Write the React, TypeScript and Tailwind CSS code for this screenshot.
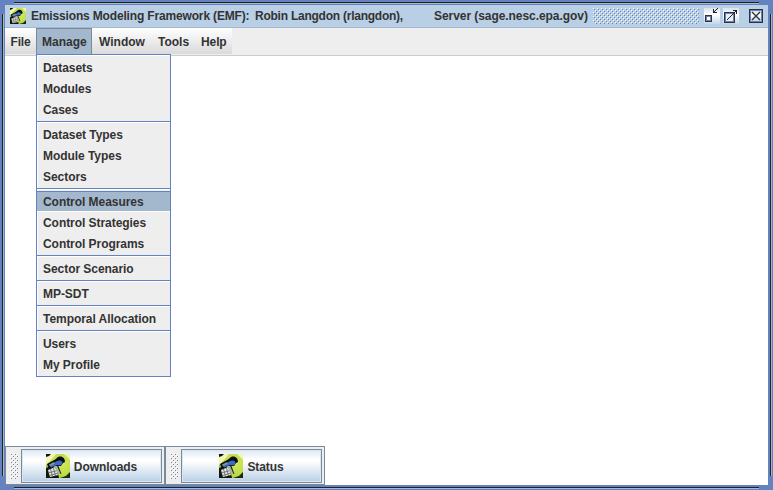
import React from "react";

function GlobeIcon({ size }: { size: number }) {
  return (
    <svg width={size} height={size} viewBox="0 0 24 24" className="block shrink-0">
      <defs>
        <radialGradient id="lime" cx="0.65" cy="0.4" r="0.75">
          <stop offset="0" stopColor="#d3ea5e" />
          <stop offset="0.6" stopColor="#c0dd4a" />
          <stop offset="1" stopColor="#94b52c" />
        </radialGradient>
      </defs>
      <rect width="24" height="24" fill="url(#lime)" />
      <path d="M0 0H10L5 6L0 11Z" fill="#f2f6b4" />
      <path d="M0 0H5L3 2L0 3Z" fill="#111" />
      <path d="M0 14L5 12L11 15L13 24H0Z" fill="#15170f" />
      <path d="M24 18V24H14L20 22Z" fill="#20280c" />
      <path d="M18 0H24V6Z" fill="#f0f6ae" />
      <path d="M1 10L9 5.500L12 3C16 1.500 19 4 19 8L17 9L15 12L11 12L3 15Z" fill="#0b0d18" />
      <path d="M4 11.500L11 7C14 5.500 17 7 16.500 9.500C15.500 11.500 13 11.500 11 11L5 13.500Z" fill="#3d6cc0" />
      <path d="M3 10.500L8 8L9 9.500L4 12.500Z" fill="#7c969c" />
      <path d="M2 16L8 13.500L11 15L12 21L4 23Z" fill="#e2e5e1" />
      <path d="M2 19L11.500 16.500M4 21.500L12 19M4.500 15L6.500 22.500M7.500 14L9.500 22" stroke="#596059" strokeWidth="0.8" fill="none" />
      <path d="M8 12L11 12L14.500 20L12.500 20Z" fill="#a9b8ae" />
      <path d="M11 12L12.500 12L15.500 20L14.500 20Z" fill="#222b16" />
    </svg>
  );
}

function Bumps({ id, width, height, light, dark }: { id: string; width: number; height: number; light: string; dark: string }) {
  return (
    <svg width={width} height={height} shapeRendering="crispEdges" className="block shrink-0">
      <defs>
        <pattern id={id} width="4" height="4" patternUnits="userSpaceOnUse">
          <rect x="0" y="0" width="1" height="1" fill={light} />
          <rect x="2" y="2" width="1" height="1" fill={light} />
          <rect x="1" y="1" width="1" height="1" fill={dark} />
          <rect x="3" y="3" width="1" height="1" fill={dark} />
        </pattern>
      </defs>
      <rect width={width} height={height} fill={`url(#${id})`} />
    </svg>
  );
}

function WindowButtons() {
  return (
    <svg width="62" height="16" shapeRendering="crispEdges" className="ml-[5px] block shrink-0">
      <defs>
        <linearGradient id="btn" x1="0" y1="0" x2="0" y2="1">
          <stop offset="0" stopColor="#d5e3f0" />
          <stop offset="0.4" stopColor="#ffffff" />
          <stop offset="1" stopColor="#c2d6e9" />
        </linearGradient>
      </defs>
      <rect width="16" height="16" fill="url(#btn)" />
      <rect x="1" y="7" width="7" height="7" fill="#333" />
      <rect x="2" y="8" width="6" height="6" fill="#6382bf" />
      <path d="M7 7h1v7H1v-1h6z" fill="#333" />
      <rect x="3" y="9" width="3" height="3" fill="#fff" />
      <path d="M9 1h1v3h3v1H9zM10 3h1v1h-1zM11 2h1v1h-1zM12 1h1v1h-1zM13 0h1v1h-1z" fill="#222" />
      <g transform="translate(19 0)">
        <rect width="16" height="16" fill="url(#btn)" />
        <path d="M1 4h11v11H1z" fill="#333" />
        <path d="M2 5h9v9H2z" fill="#6382bf" />
        <path d="M3 6h7v7H3z" fill="#e9f1f8" />
        <path d="M4 11h1v1H4zM5 10h1v1H5zM6 9h1v1H6zM7 8h1v1H7zM8 7h1v1H8zM9 6h1v1H9zM10 5h1v1h-1zM11 4h1v1h-1zM12 3h1v1h-1zM10 2h4v4h-1V3h-3z" fill="#222" />
      </g>
      <g transform="translate(45 1)">
        <rect width="14" height="14" fill="#333" />
        <rect x="1" y="1" width="12" height="12" fill="#6382bf" />
        <rect x="2" y="2" width="10" height="10" fill="url(#btn)" />
        <path d="M3 3L11 11M11 3L3 11" stroke="#333" strokeWidth="1.4" shapeRendering="auto" />
      </g>
    </svg>
  );
}

const groups: string[][] = [
  ["Datasets", "Modules", "Cases"],
  ["Dataset Types", "Module Types", "Sectors"],
  ["Control Measures", "Control Strategies", "Control Programs"],
  ["Sector Scenario"],
  ["MP-SDT"],
  ["Temporal Allocation"],
  ["Users", "My Profile"],
];

function ManageMenu() {
  return (
    <div className="absolute left-0 top-[26px] z-10 w-[135px] border border-[#6382bf] bg-[#eeeeee] pb-px pt-[2px] tracking-[-0.05px] shadow-[inset_1px_1px_0_#fff]">
      {groups.map((items, i) => (
        <React.Fragment key={i}>
          {i > 0 && (
            <div className="h-1 pt-px">
              <div className="h-[2px] border-b border-t border-b-white border-t-[#6382bf]" />
            </div>
          )}
          {items.map((label) => (
            <div
              key={label}
              className={
                label === "Control Measures"
                  ? "h-[21px] border-b border-t border-b-white border-t-[#6382bf] bg-[#a3b8cc] pl-[6px] leading-[20px]"
                  : "h-[21px] pl-[6px] leading-[22px]"
              }
            >
              {label}
            </div>
          ))}
        </React.Fragment>
      ))}
    </div>
  );
}

function TaskButton({ label, id }: { label: string; id: string }) {
  return (
    <div className="flex h-[39px] w-[160px] border border-[#7a8a99] bg-[#eeeeee] pl-1 pt-[2px]">
      <div className="w-[11px] pt-1">
        <Bumps id={id} width={8} height={26} light="#ffffff" dark="#7a8a99" />
      </div>
      <div className="flex h-[34px] w-[141px] items-center justify-center gap-1 border border-[#7a8a99] bg-[linear-gradient(#dde8f3_0%,#ffffff_30%,#ffffff_35%,#b8cfe5_100%)] tracking-[-0.08px] shadow-[inset_0_0_0_1px_#dbe6f1]">
        <GlobeIcon size={24} />
        <span className="pt-px">{label}</span>
      </div>
    </div>
  );
}

export default function App() {
  return (
    <div className="relative flex h-[490px] w-[773px] flex-col overflow-hidden whitespace-pre bg-[#6382bf] p-[5px] font-['Liberation_Sans',Arial,sans-serif] text-[12px] font-bold text-[#333333]">
      <div className="absolute left-[14px] top-[2px] h-[2px] w-[745px] border-b border-t border-b-[#a3b8cc] border-t-[#222]" />
      <div className="absolute bottom-[1px] left-[14px] h-[2px] w-[745px] border-b border-t border-b-[#a3b8cc] border-t-[#222]" />
      <div className="absolute left-[2px] top-[14px] h-[462px] w-[2px] border-l border-r border-l-[#222] border-r-[#a3b8cc]" />
      <div className="absolute right-[1px] top-[14px] h-[462px] w-[2px] border-l border-r border-l-[#222] border-r-[#a3b8cc]" />
      <header className="flex h-[23px] w-[763px] shrink-0 items-center border-b border-[#a3b8cc] bg-[#b8cfe5] pl-[5px]">
        <GlobeIcon size={16} />
        <span className="ml-[5px] w-[224px] tracking-[-0.16px]">Emissions Modeling Framework (EMF):</span>
        <span className="w-[179px] tracking-[-0.24px]">Robin Langdon (rlangdon),</span>
        <span className="w-[159px] tracking-[-0.06px]">Server (sage.nesc.epa.gov)</span>
        <Bumps id="title-bumps" width={106} height={16} light="#ffffff" dark="#6382bf" />
        <WindowButtons />
      </header>
      <nav className="flex h-[28px] w-[763px] shrink-0 border-b border-[#cccccc] bg-[#eeeeee] leading-[28px]">
        <div className="flex h-[26px] w-[227px] bg-[linear-gradient(#ffffff,#dadada)]">
          <div className="w-[31px] pl-[5.5px] tracking-[-0.2px]">File</div>
          <div className="relative w-[56px]">
            <div className="h-[27px] border border-b-0 border-[#7a8a99] bg-[#a3b8cc] pl-[5px] leading-[26px]">Manage</div>
            <ManageMenu />
          </div>
          <div className="w-[59px] pl-[7px]">Window</div>
          <div className="w-[43px] pl-[7px]">Tools</div>
          <div className="pl-[7px] tracking-[-0.1px]">Help</div>
        </div>
      </nav>
      <main className="flex h-[429px] w-[763px] flex-col justify-end bg-white">
        <div className="flex">
          <TaskButton label="Downloads" id="grip-a" />
          <TaskButton label="Status" id="grip-b" />
        </div>
      </main>
    </div>
  );
}
